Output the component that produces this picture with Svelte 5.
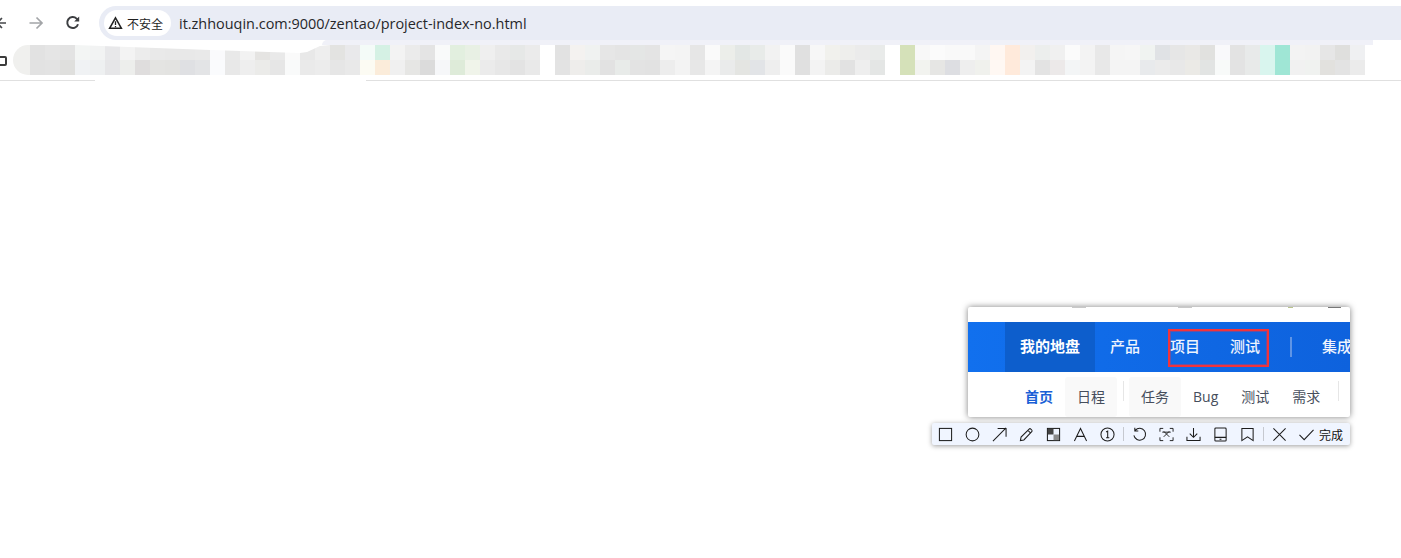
<script>
  const cols = "e2e2e2 e2e2e2,e5e5e5 e3e3e3,e3e3e3 dfdfdd,f3f5f4 f0f2f4,f2f3f3 eef0f1,e8e8ea e6e6e8,f3f3f3 edeeec,ececec dfdddd,e9e9e9 e4e4e2,e8e8e8 e3e3e1,e8e8e8 dfe0e3,e9e9e9 e3e4e6,fafafc fafbfd,e9e9e9 e8e8e8,f2f2f2 eeeeee,e5e4e2 ebebe9,e9e9e9 e6e6e6,fafafa f9fafa,e8e8e8 eaeaea,eeeeee ececec,e3e3e1 e6e6e6,e9e9eb e9e9e9,f4fbf8 fcfbf3,d5f1e4 fbecda,f3f3f3 f0f0f0,ebebeb e6e6e4,e4e4e4 dbdbdb,f9fafa f6f7f9,e2efdf deebd9,e8f0e4 f0f4ea,efefef ebebeb,e9e9e9 e7e7e7,e6e8e7 e3e3e3,ebebeb e9e9e9,ffffff ffffff,e2e2e2 e3e3e3,f4f2f0 eeedeb,f0f2f1 eaecea,e6e6e6 e2e2e2,e4e4e4 e8ebe9,e4e6e5 e3e3e3,e4e4e4 e2e2e2,f5f5f5 ededed,f4f4f4 f3f3f3,e6e6e6 e7e7e7,fafafa f4f4f4,eceeea eaebeb,e3e7e5 e4e5e2,e8ebe9 e2e4e7,f2f2f2 eeeeee,fafafa fafafa,e0e0e0 e0e0e0,f7f7f7 f3f3f3,f1f1ed ebebe9,eeeeec e2e2e2,ebebeb eeeeee,e9ebea e4e6e5,ffffff ffffff,d5e1b9 d5e1b9,f8f8f8 f2f3ef,fbfbfb e6e6e4,f9f9f9 dddee2,f9f9f9 eeeeee,f4f4f4 f0f1ed,fff7f2 fff8f3,ffeadb ffeadb,f2f0ee f3f3f3,eceeed e3e3e3,f0f0f0 ece9e9,fbfbfb f3f5f6,f3f3f3 f3f3f3,e8e8e8 e8e8e8,f5f5f5 f4f4f4,f6f6f6 f4f4f4,f0f3f1 e8eaec,e0e2e5 ebebeb,e6e6e6 e8e8e8,e9e8e6 ebeae6,e1e1df e2e4e3,f9f9fb f8faf9,e3e3e3 e3e3e3,e8eaea e8eae9,d9f5ee d9f5ee,9fe6d5 9fe6d5,f3f3f3 f1f1f1,f2f2f2 f0f2f0,e6e6e6 e2e1de,dfdfdd e3e3e3,eff0f2 ebebeb"
    .split(",").map((c) => c.split(" "));
  const nav = ["产品", "项目", "测试"];
</script>

<div class="browser">
  <header class="topbar">
    <div class="navicons">
      <svg class="back" width="7" height="16" viewBox="0 0 7 16"><path d="M6 8H-6M2 3-3 8 2 13" fill="none" stroke="#45474a" stroke-width="1.600"/></svg>
      <svg class="fwd" width="16" height="16" viewBox="0 0 16 16"><path d="M1.500 8H14M8.500 2.500 14 8l-5.500 5.500" fill="none" stroke="#a3a5a8" stroke-width="1.700"/></svg>
      <svg class="reload" width="16" height="16" viewBox="0 0 16 16"><path d="M13 9.200A5.500 5.500 0 1 1 11.600 3.600L13.400 5.400" fill="none" stroke="#3c3e41" stroke-width="2"/><path d="M14.200 1.500V6.500H9.200Z" fill="#3c3e41"/></svg>
    </div>
    <div class="omnibox">
      <div class="chip">
        <svg width="15" height="14" viewBox="0 0 15 14"><path d="M7.500 1.800 13.400 12.300H1.600Z" fill="none" stroke="#222" stroke-width="1.500"/><path d="M7.500 5.200V9M7.500 9.900v1.300" stroke="#222" stroke-width="1.300"/></svg>
        <span>不安全</span>
      </div>
      <span class="url">it.zhhouqin.com:9000/zentao/project-index-no.html</span>
    </div>
  </header>

  <div class="bookmarks">
    <span class="bm-square"></span>
    <span class="blob"></span>
    <div class="mosaic">
      {#each cols as c}
        <div class="col"><i style:background={"#" + c[0]}></i><i style:background={"#" + c[1]}></i></div>
      {/each}
    </div>
    <span class="band"></span>
    <span class="taper"></span>
    <span class="rule rule-a"></span>
    <span class="rule rule-b"></span>
  </div>

  <aside class="capture">
    <div class="shot">
      <div class="strip">
        <i class="m1"></i><i class="m2"></i><i class="m3"></i><i class="m4"></i>
      </div>
      <nav class="mainnav">
        <a class="active" href="#a">我的地盘</a>
        {#each nav as n}<a href="#a">{n}</a>{/each}
        <span class="divider"></span>
        <a class="last" href="#a">集成</a>
        <span class="redbox"></span>
      </nav>
      <nav class="subnav">
        <a class="cur" href="#a">首页</a>
        <a class="soft" href="#a">日程</a>
        <span class="sep"></span>
        <a class="soft" href="#a">任务</a>
        <a class="tight" href="#a">Bug</a>
        <a class="tight" href="#a">测试</a>
        <a href="#a">需求</a>
        <span class="sep"></span>
      </nav>
    </div>

    <div class="tools">
      <button aria-label="矩形"><svg viewBox="0 0 16 16"><rect x="1.500" y="1.500" width="13" height="13"/></svg></button>
      <button aria-label="圆形"><svg viewBox="0 0 16 16"><circle cx="8" cy="8" r="6.800"/></svg></button>
      <button aria-label="箭头"><svg viewBox="0 0 16 16"><path d="M1 15 15 1M6 1.500h9v9"/></svg></button>
      <button aria-label="画笔"><svg viewBox="0 0 16 16"><path d="M1.500 14.500 2.200 10.800 10.800 2.200a1.300 1.300 0 0 1 1.800 0l1 1a1.300 1.300 0 0 1 0 1.800L5.200 13.800ZM9.500 3.500l3 3"/></svg></button>
      <button aria-label="马赛克"><svg viewBox="0 0 16 16"><rect x="1.500" y="1.500" width="13" height="13"/><path class="fill" d="M2 2h6v6H2z"/><path class="fill2" d="M8 8h6v6H8z"/></svg></button>
      <button aria-label="文字"><svg viewBox="0 0 16 16"><path d="M1.500 15 8 1.500 14.500 15M4 10h8"/></svg></button>
      <button aria-label="序号"><svg viewBox="0 0 16 16"><circle cx="8" cy="8" r="7"/><path d="M6.500 5.300 8.200 4.300V11.500M6.500 11.500h3.400" stroke-width="1.100"/></svg></button>
      <span class="tsep"></span>
      <button aria-label="撤销"><svg viewBox="0 0 16 16"><path d="M3.500 3.500A6.300 6.300 0 1 1 2 9M3 .8v3.500h3.700"/></svg></button>
      <button aria-label="滚动截图"><svg viewBox="0 0 16 16"><path d="M1 5V1.500h3.500M11.500 1.500H15V5M15 11v3.500h-3.500M4.500 14.500H1V11M5 4.500l6 6M11 4.500l-6 6M3.500 5.500h9" stroke-width="1"/></svg></button>
      <button aria-label="保存"><svg viewBox="0 0 16 16"><path d="M8 1v9.500M4 7l4 4 4-4M1 10.500v4h14v-4"/></svg></button>
      <button aria-label="手机"><svg viewBox="0 0 16 16"><rect x="2" y="1" width="12" height="14" rx="1"/><path d="M2 11h12M7 13h2" stroke-width="1.200"/></svg></button>
      <button aria-label="钉住"><svg viewBox="0 0 16 16"><path d="M2 1.500h12v13L8 10.500l-6 4Z"/></svg></button>
      <span class="tsep"></span>
      <button aria-label="关闭"><svg viewBox="0 0 16 16"><path d="M1.500 1.500l13 13M14.500 1.500l-13 13"/></svg></button>
      <button class="done"><svg viewBox="0 0 16 16"><path d="M.5 8.500 5.500 13.500 15.500 3"/></svg><span>完成</span></button>
    </div>
  </aside>
</div>

<style>
  :global(body) { margin: 0; background: #fff; }
  .browser {
    position: relative;
    width: 1401px;
    height: 558px;
    overflow: hidden;
    background: #fff;
    font-family: "Noto Sans CJK SC", "Liberation Sans", sans-serif;
  }

  .topbar { display: flex; height: 45px; box-sizing: border-box; padding-top: 6px; }
  .navicons { width: 99px; flex: none; display: flex; align-items: center; height: 34px; }
  .back { margin-right: 21px; }
  .fwd { margin-right: 21px; }
  .omnibox {
    flex: 1;
    height: 34px;
    display: flex;
    align-items: center;
    background: #e9ecf5;
    border-radius: 17px 0 0 17px;
    padding-left: 5px;
  }
  .chip {
    display: flex;
    align-items: center;
    gap: 4px;
    width: 67px;
    height: 26px;
    box-sizing: border-box;
    padding-left: 4px;
    background: #fff;
    border-radius: 13px;
    font-size: 12px;
    color: #1f1f1f;
    white-space: nowrap;
  }
  .url {
    margin-left: 8px;
    font-family: "Open Sans", "Noto Sans", sans-serif;
    font-size: 14.450px;
    color: #26272a;
    white-space: nowrap;
  }

  .bookmarks { position: relative; height: 36px; }
  .mosaic { display: flex; margin-left: 30px; height: 30px; }
  .col { width: 15px; display: flex; flex-direction: column; flex: none; }
  .col i { display: block; height: 15px; }
  .bm-square {
    position: absolute; left: -4px; top: 11px; width: 11px; height: 10px;
    box-sizing: border-box;
    border: 2px solid #3c3c3c; border-radius: 2px;
  }
  .blob {
    position: absolute; left: 13px; top: 0; width: 17px; height: 30px;
    background: #f0f0ee; border-radius: 15px 0 0 15px;
  }
  .band {
    position: absolute; left: 322px; top: -5px; width: 1051px; height: 5px;
    background: #f0f1f8; border-radius: 6px 0 0 0;
  }
  .taper {
    position: absolute; left: 75px; top: 0; width: 255px; height: 8px;
    background: #fff;
    clip-path: polygon(0 0, 135px 5px, 225px 8px, 232px 7px, 245px 1px, 255px 0);
  }
  .rule { position: absolute; top: 35px; height: 1px; background: #e0e0e0; }
  .rule-a { left: 0; width: 95px; }
  .rule-b { left: 366px; right: 0; }

  .capture { position: absolute; left: 932px; top: 307px; width: 418px; }
  .shot {
    margin-left: 36px;
    width: 382px;
    height: 110px;
    background: #fff;
    box-shadow: 0 0 6px rgba(0, 0, 0, 0.5);
    border-radius: 2px;
    overflow: hidden;
  }
  .strip { position: relative; height: 15px; }
  .strip i { position: absolute; top: 0; height: 1px; background: #c9c9c9; }
  .m1 { left: 104px; width: 14px; }
  .m2 { left: 210px; width: 14px; }
  .m3 { left: 320px; width: 5px; background: #b9c48e !important; }
  .m4 { left: 360px; width: 13px; background: #777 !important; }

  .mainnav {
    position: relative;
    display: flex;
    align-items: stretch;
    height: 50px;
    padding-left: 37px;
    box-sizing: border-box;
    background: linear-gradient(90deg, #1170ee, #0e62dd);
  }
  .mainnav a {
    display: flex;
    align-items: center;
    padding: 0 15px 3px;
    flex: none;
    color: #eef4fe;
    font-size: 15px;
    font-weight: 500;
    text-decoration: none;
  }
  .mainnav a.active { background: #0d5ecc; color: #fff; font-weight: 700; }
  .divider {
    flex: none;
    width: 2px;
    height: 20px;
    margin: 15px 30px 0 15px;
    background: #5f95e6;
  }
  .mainnav a.last { padding: 0 0 3px; }
  .redbox {
    position: absolute;
    left: 200px;
    top: 7px;
    width: 97px;
    height: 34px;
    border: 2px solid #f2333b;
    box-shadow: inset 0 0 0 1px rgba(242, 51, 59, 0.4);
  }

  .subnav {
    display: flex;
    align-items: stretch;
    height: 45px;
    box-sizing: border-box;
    padding: 5px 0 0 45px;
    font-family: "Open Sans", "Noto Sans CJK SC", sans-serif;
  }
  .subnav a {
    display: flex;
    align-items: center;
    padding: 0 12px 2px;
    box-sizing: border-box;
    flex: none;
    height: 40px;
    font-size: 14px;
    color: #464e5c;
    text-decoration: none;
  }
  .subnav a.cur { color: #1a5fd6; font-weight: 600; }
  .subnav a.soft { background: #f9f9f9; border-radius: 3px; }
  .subnav a.tight { padding-right: 11px; }
  .sep { flex: none; width: 1px; height: 20px; margin: 4px 5px 0 6px; background: #e6e6e6; }

  .tools {
    display: flex;
    align-items: center;
    height: 22px;
    margin-top: 6px;
    background: #f0f5ff;
    border-radius: 2px;
    box-shadow: 0 1px 5px rgba(0, 0, 0, 0.38);
  }
  .tools button {
    flex: none;
    width: 27px;
    height: 22px;
    padding: 0;
    display: flex;
    align-items: center;
    justify-content: center;
    background: none;
    border: 0;
    font: inherit;
  }
  .tools svg {
    width: 15px;
    height: 15px;
    fill: none;
    stroke: #1c1c1c;
    stroke-width: 1.100;
  }
  .tools svg .fill { fill: #444; stroke: none; }
  .tools svg .fill2 { fill: #8a8a8a; stroke: none; }
  .tsep { flex: none; width: 1px; height: 14px; margin: 0 2px; background: #c6c9d0; }
  .tools .done { width: auto; gap: 5px; padding-left: 6px; font-size: 12px; color: #111; }
  .tools .done svg { flex: none; }
</style>
